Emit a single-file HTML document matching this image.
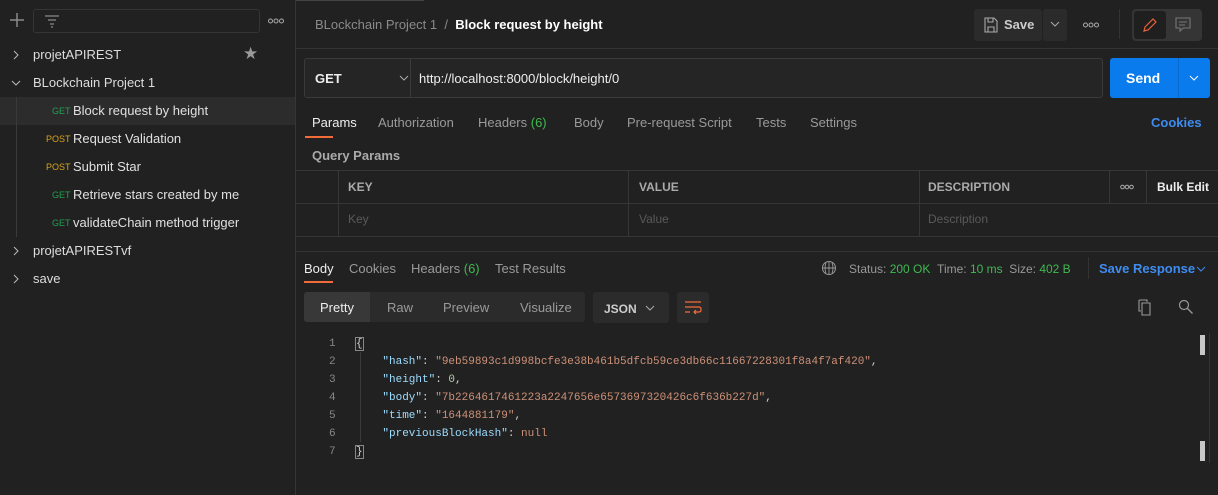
<!DOCTYPE html>
<html><head><meta charset="utf-8"><style>
*{box-sizing:border-box;margin:0;padding:0}
body{width:1218px;height:495px;background:#212121;font-family:"Liberation Sans",sans-serif;font-size:13px;color:#d0d0d0;position:relative;overflow:hidden}
.a{position:absolute;white-space:nowrap}
.g{color:#1fa14f;font-size:9px;line-height:10px}
.p{color:#d7a21a;font-size:9px;line-height:10px}
.dim{color:#9a9a9a}
.mono{font-family:"Liberation Mono",monospace;font-size:11px}
.k{color:#9cdcfe}.s{color:#ce9178}.n{color:#b5cea8}
svg{position:absolute}
</style></head><body>
<!-- sidebar -->
<div class="a" style="left:295px;top:0;width:1px;height:495px;background:#363636"></div>
<svg style="left:9px;top:12px" width="16" height="16"><path d="M8 1v14M1 8h14" stroke="#8a8a8a" stroke-width="1.5"/></svg>
<div class="a" style="left:33px;top:9px;width:227px;height:24px;border:1px solid #353535;border-radius:3px;background:#212121"></div>
<svg style="left:44px;top:14px" width="16" height="14"><path d="M1 2h14M4 6h8M6 10h4M7 13h2" stroke="#8a8a8a" stroke-width="1.2"/></svg>
<svg style="left:268px;top:18px" width="16" height="6"><circle cx="2.5" cy="3" r="2" fill="none" stroke="#aaa"/><circle cx="8" cy="3" r="2" fill="none" stroke="#aaa"/><circle cx="13.5" cy="3" r="2" fill="none" stroke="#aaa"/></svg>
<svg style="left:13px;top:50px" width="6" height="10"><path d="M1 1l4 4-4 4" fill="none" stroke="#bbb"/></svg>
<div class="a" style="left:33px;top:47px;color:#ddd">projetAPIREST</div>
<div class="a" style="left:243px;top:44px;color:#9a9a9a;font-size:17px">★</div>
<svg style="left:11px;top:80px" width="10" height="6"><path d="M1 1l4 4 4-4" fill="none" stroke="#bbb"/></svg>
<div class="a" style="left:33px;top:75px;color:#ddd">BLockchain Project 1</div>
<div class="a" style="left:0;top:97px;width:295px;height:28px;background:#2c2c2c"></div>
<div class="a" style="left:16px;top:97px;width:1px;height:140px;background:#3a3a3a"></div>
<div class="a g" style="left:52px;top:106px">GET</div>
<div class="a" style="left:73px;top:103px;color:#e0e0e0">Block request by height</div>
<div class="a p" style="left:46px;top:134px">POST</div>
<div class="a" style="left:73px;top:131px;color:#e0e0e0">Request Validation</div>
<div class="a p" style="left:46px;top:162px">POST</div>
<div class="a" style="left:73px;top:159px;color:#e0e0e0">Submit Star</div>
<div class="a g" style="left:52px;top:190px">GET</div>
<div class="a" style="left:73px;top:187px;color:#e0e0e0">Retrieve stars created by me</div>
<div class="a g" style="left:52px;top:218px">GET</div>
<div class="a" style="left:73px;top:215px;color:#e0e0e0">validateChain method trigger</div>
<svg style="left:13px;top:246px" width="6" height="10"><path d="M1 1l4 4-4 4" fill="none" stroke="#bbb"/></svg>
<div class="a" style="left:33px;top:243px;color:#ddd">projetAPIRESTvf</div>
<svg style="left:13px;top:274px" width="6" height="10"><path d="M1 1l4 4-4 4" fill="none" stroke="#bbb"/></svg>
<div class="a" style="left:33px;top:271px;color:#ddd">save</div>
<!-- header -->
<div class="a" style="left:296px;top:0;width:128px;height:1px;background:#444"></div>
<div class="a" style="left:315px;top:17px;color:#8a8a8a">BLockchain Project 1 &nbsp;/ &nbsp;<b style="color:#fff">Block request by height</b></div>
<div class="a" style="left:974px;top:9px;width:68px;height:32px;background:#2b2b2b;border-radius:3px"></div>
<svg style="left:984px;top:17px" width="14" height="16"><path d="M1 1h9l3 3v11H1z M4 1v4h5V1 M4 15v-5h6v5" fill="none" stroke="#aaa" stroke-width="1.1"/></svg>
<div class="a" style="left:1004px;top:17px;color:#ccc;font-weight:bold">Save</div>
<div class="a" style="left:1043px;top:9px;width:24px;height:32px;background:#2b2b2b;border-radius:3px"></div>
<svg style="left:1050px;top:21px" width="10" height="6"><path d="M1 1l4 4 4-4" fill="none" stroke="#aaa"/></svg>
<svg style="left:1083px;top:22px" width="16" height="6"><circle cx="2.5" cy="3" r="2" fill="none" stroke="#aaa"/><circle cx="8" cy="3" r="2" fill="none" stroke="#aaa"/><circle cx="13.5" cy="3" r="2" fill="none" stroke="#aaa"/></svg>
<div class="a" style="left:1119px;top:9px;width:1px;height:30px;background:#333"></div>
<div class="a" style="left:1132px;top:9px;width:70px;height:32px;background:#353535;border-radius:4px"></div>
<div class="a" style="left:1134px;top:11px;width:32px;height:28px;background:#1f1f1f;border-radius:3px"></div>
<svg style="left:1142px;top:17px" width="16" height="16"><path d="M2 14l1-4 8-8 3 3-8 8z" fill="none" stroke="#e8643a" stroke-width="1.2"/></svg>
<svg style="left:1175px;top:17px" width="16" height="16"><path d="M1 1h14v10H8l-3 3v-3H1z M4 5h8M4 8h6" fill="none" stroke="#777" stroke-width="1.1"/></svg>
<div class="a" style="left:296px;top:48px;width:922px;height:1px;background:#333"></div>
<!-- url -->
<div class="a" style="left:304px;top:58px;width:799px;height:40px;border:1px solid #3a3a3a;border-radius:3px;background:#252525"></div>
<div class="a" style="left:410px;top:59px;width:1px;height:38px;background:#3a3a3a"></div>
<div class="a" style="left:315px;top:71px;color:#eee;font-weight:bold">GET</div>
<svg style="left:399px;top:75px" width="10" height="6"><path d="M1 1l4 4 4-4" fill="none" stroke="#aaa"/></svg>
<div class="a" style="left:419px;top:71px;color:#eee">http://localhost:8000/block/height/0</div>
<div class="a" style="left:1110px;top:58px;width:100px;height:40px;background:#097bed;border-radius:3px"></div>
<div class="a" style="left:1178px;top:58px;width:1px;height:40px;background:#0a6ad0"></div>
<div class="a" style="left:1126px;top:70px;color:#fff;font-weight:bold;font-size:14px">Send</div>
<svg style="left:1189px;top:75px" width="10" height="6"><path d="M1 1l4 4 4-4" fill="none" stroke="#fff"/></svg>
<!-- tabs -->
<div class="a" style="left:312px;top:115px;color:#eee">Params</div>
<div class="a" style="left:305px;top:136px;width:28px;height:2px;background:#f26b3a"></div>
<div class="a dim" style="left:378px;top:115px">Authorization</div>
<div class="a dim" style="left:478px;top:115px">Headers <span style="color:#3fb950">(6)</span></div>
<div class="a dim" style="left:574px;top:115px">Body</div>
<div class="a dim" style="left:627px;top:115px">Pre-request Script</div>
<div class="a dim" style="left:756px;top:115px">Tests</div>
<div class="a dim" style="left:810px;top:115px">Settings</div>
<div class="a" style="left:1151px;top:115px;color:#3f8cf0;font-weight:bold">Cookies</div>
<div class="a dim" style="left:312px;top:148px;font-weight:bold;color:#aaa">Query Params</div>
<!-- table -->
<div class="a" style="left:296px;top:170px;width:922px;height:67px;border-top:1px solid #363636;border-bottom:1px solid #363636"></div>
<div class="a" style="left:296px;top:203px;width:922px;height:1px;background:#363636"></div>
<div class="a" style="left:338px;top:170px;width:1px;height:67px;background:#363636"></div>
<div class="a" style="left:628px;top:170px;width:1px;height:67px;background:#363636"></div>
<div class="a" style="left:919px;top:170px;width:1px;height:67px;background:#363636"></div>
<div class="a" style="left:1109px;top:170px;width:1px;height:33px;background:#363636"></div>
<div class="a" style="left:1146px;top:170px;width:1px;height:33px;background:#363636"></div>
<div class="a" style="left:348px;top:180px;color:#aaa;font-weight:bold;font-size:12px">KEY</div>
<div class="a" style="left:639px;top:180px;color:#aaa;font-weight:bold;font-size:12px">VALUE</div>
<div class="a" style="left:928px;top:180px;color:#aaa;font-weight:bold;font-size:12px">DESCRIPTION</div>
<svg style="left:1120px;top:184px" width="14" height="6"><circle cx="2.5" cy="3" r="1.8" fill="none" stroke="#aaa"/><circle cx="7" cy="3" r="1.8" fill="none" stroke="#aaa"/><circle cx="11.5" cy="3" r="1.8" fill="none" stroke="#aaa"/></svg>
<div class="a" style="left:1157px;top:180px;color:#eee;font-weight:bold;font-size:12px">Bulk Edit</div>
<div class="a" style="left:348px;top:212px;color:#5a5a5a;font-size:12px">Key</div>
<div class="a" style="left:639px;top:212px;color:#5a5a5a;font-size:12px">Value</div>
<div class="a" style="left:928px;top:212px;color:#5a5a5a;font-size:12px">Description</div>
<!-- response -->
<div class="a" style="left:296px;top:251px;width:922px;height:1px;background:#333"></div>
<div class="a" style="left:304px;top:261px;color:#eee">Body</div>
<div class="a" style="left:304px;top:281px;width:29px;height:2px;background:#f26b3a"></div>
<div class="a dim" style="left:349px;top:261px">Cookies</div>
<div class="a dim" style="left:411px;top:261px">Headers <span style="color:#3fb950">(6)</span></div>
<div class="a dim" style="left:495px;top:261px">Test Results</div>
<svg style="left:821px;top:260px" width="16" height="16"><circle cx="8" cy="8" r="6.5" fill="none" stroke="#999"/><path d="M1.5 8h13M8 1.5v13M5 3q-2 5 0 10M11 3q2 5 0 10" fill="none" stroke="#999" stroke-width=".9"/></svg>
<div class="a" style="left:849px;top:262px;font-size:12px;color:#999">Status: <span style="color:#3fb950">200 OK</span> &nbsp;Time: <span style="color:#3fb950">10 ms</span> &nbsp;Size: <span style="color:#3fb950">402 B</span></div>
<div class="a" style="left:1088px;top:257px;width:1px;height:22px;background:#333"></div>
<div class="a" style="left:1099px;top:261px;color:#3f8cf0;font-weight:bold">Save Response</div>
<svg style="left:1196px;top:266px" width="10" height="6"><path d="M1 1l4 4 4-4" fill="none" stroke="#3f8cf0"/></svg>
<div class="a" style="left:304px;top:292px;width:281px;height:30px;background:#2b2b2b;border-radius:3px"></div>
<div class="a" style="left:304px;top:292px;width:66px;height:30px;background:#383838;border-radius:3px 0 0 3px"></div>
<div class="a" style="left:320px;top:300px;color:#eee">Pretty</div>
<div class="a dim" style="left:387px;top:300px">Raw</div>
<div class="a dim" style="left:443px;top:300px">Preview</div>
<div class="a dim" style="left:520px;top:300px">Visualize</div>
<div class="a" style="left:593px;top:292px;width:76px;height:31px;background:#2b2b2b;border-radius:3px"></div>
<div class="a" style="left:604px;top:302px;color:#ccc;font-weight:bold;font-size:12px">JSON</div>
<svg style="left:645px;top:305px" width="10" height="6"><path d="M1 1l4 4 4-4" fill="none" stroke="#aaa"/></svg>
<div class="a" style="left:677px;top:292px;width:32px;height:31px;background:#2b2b2b;border-radius:3px"></div>
<svg style="left:684px;top:299px" width="18" height="18"><path d="M1 3h16M1 8h14q2 0 2 2.5T15 13h-5M12 11l-2 2 2 2M1 13h5" fill="none" stroke="#f26b3a" stroke-width="1.2"/></svg>
<svg style="left:1138px;top:299px" width="16" height="18"><path d="M4 4h8v12H4z M1 1h8v2M1 1v11h2" fill="none" stroke="#999" stroke-width="1.1"/></svg>
<svg style="left:1178px;top:299px" width="16" height="16"><circle cx="6" cy="6" r="4.5" fill="none" stroke="#999" stroke-width="1.2"/><path d="M9.5 9.5l5 5" stroke="#999" stroke-width="1.3"/></svg>
<!-- code -->
<div class="a mono" style="left:329px;top:335px;color:#888;line-height:18px;text-align:right">1<br>2<br>3<br>4<br>5<br>6<br>7</div>
<div class="a mono" style="left:356px;top:335px;line-height:18px;color:#d0d0d0"><span style="outline:1px solid #888">{</span><br>
&nbsp;&nbsp;&nbsp;&nbsp;<span class="k">"hash"</span>: <span class="s">"9eb59893c1d998bcfe3e38b461b5dfcb59ce3db66c11667228301f8a4f7af420"</span>,<br>
&nbsp;&nbsp;&nbsp;&nbsp;<span class="k">"height"</span>: <span class="n">0</span>,<br>
&nbsp;&nbsp;&nbsp;&nbsp;<span class="k">"body"</span>: <span class="s">"7b2264617461223a2247656e6573697320426c6f636b227d"</span>,<br>
&nbsp;&nbsp;&nbsp;&nbsp;<span class="k">"time"</span>: <span class="s">"1644881179"</span>,<br>
&nbsp;&nbsp;&nbsp;&nbsp;<span class="k">"previousBlockHash"</span>: <span class="s">null</span><br>
<span style="outline:1px solid #888">}</span></div>
<div class="a" style="left:360px;top:352px;width:1px;height:90px;background:#3a3a3a"></div>
<div class="a" style="left:1209px;top:333px;width:1px;height:130px;background:#333"></div>
<div class="a" style="left:1200px;top:335px;width:5px;height:20px;background:#c8c8c8"></div>
<div class="a" style="left:1200px;top:441px;width:5px;height:20px;background:#c8c8c8"></div>
</body></html>
